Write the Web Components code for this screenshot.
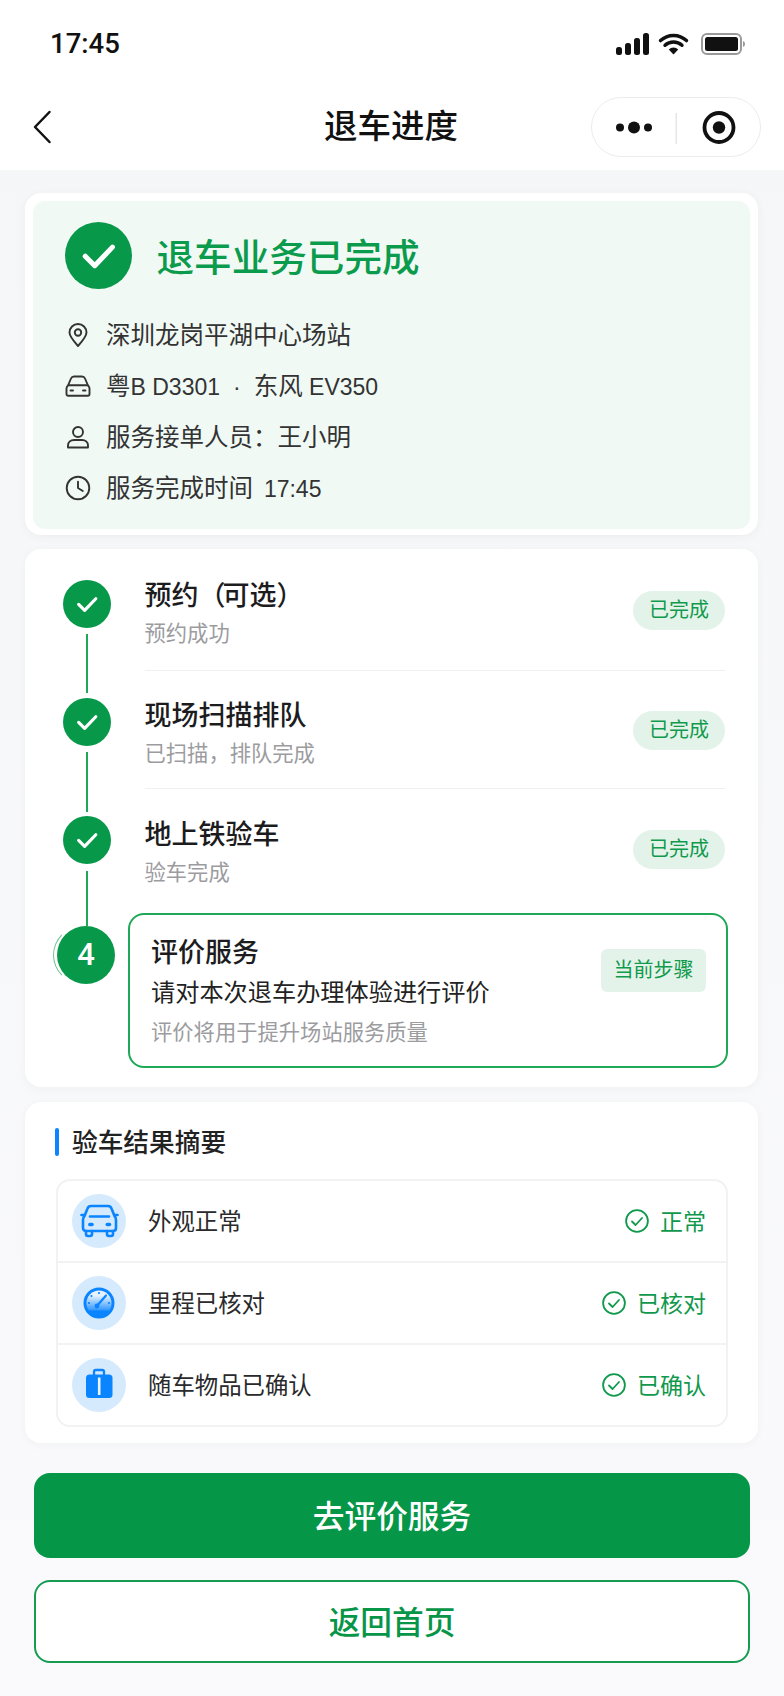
<!DOCTYPE html>
<html lang="zh-CN">
<head>
<meta charset="utf-8">
<title>退车进度</title>
<style>
    html, body { margin: 0; padding: 0; }
    body {
        width: 784px;
        height: 1696px;
        overflow: hidden;
        background: linear-gradient(#f5f6f8, #fafafc);
        font-family: "Liberation Sans", "Noto Sans CJK SC", sans-serif;
        color: #1c1c1e;
    }
    main { display: block; padding: 23px 0 0; }
    .lat { font-size: 23px; }
    .sep { font-size: 23px; margin: 0 13px; }
    .gap { margin-left: 4.5px; }
</style>
</head>
<body>
<app-header></app-header>
<main>
    <done-card>
        <info-row icon="pin">深圳龙岗平湖中心场站</info-row>
        <info-row icon="car">粤<span class="lat">B D3301</span><span class="sep">·</span>东风<span class="lat"> EV350</span></info-row>
        <info-row icon="user">服务接单人员：王小明</info-row>
        <info-row icon="clock">服务完成时间<span class="lat gap"> 17:45</span></info-row>
    </done-card>

    <step-card>
        <step-row style="--top:25px" title-text="预约<span style='margin-right:-3px'>（</span>可选）" sub="预约成功" divider></step-row>
        <step-row style="--top:27px" title-text="现场扫描排队" sub="已扫描，排队完成" divider></step-row>
        <step-row style="--top:28px" title-text="地上铁验车" sub="验车完成"></step-row>
        <current-step></current-step>
    </step-card>

    <summary-card>
        <summary-row icon="car" result="正常">外观正常</summary-row>
        <summary-row icon="gauge" result="已核对">里程已核对</summary-row>
        <summary-row icon="case" result="已确认" last>随车物品已确认</summary-row>
    </summary-card>

    <action-buttons></action-buttons>
</main>

<script>
const GREEN = "#08984a";

const CHECK = `<svg viewBox="0 0 48 48" width="100%" height="100%"><path d="M14.5 24.5l6.8 6.8L34 18" fill="none" stroke="#fff" stroke-width="3.6" stroke-linecap="round" stroke-linejoin="round"/></svg>`;

class AppHeader extends HTMLElement {
    constructor() {
        super();
        this.attachShadow({ mode: "open" });
    }

    connectedCallback() {
        this.shadowRoot.innerHTML = `
        <style>
            :host { display: block; background: #fff; height: 170px; color: #111; }
            .status {
                height: 84px;
                display: flex;
                align-items: center;
                justify-content: space-between;
                padding: 22px 38px 19px 50px;
                box-sizing: border-box;
            }
            .time { font: 500 27.5px/28px Roboto, sans-serif; }
            .status svg { display: block; }
            .nav {
                height: 86px;
                display: grid;
                grid-template-columns: 1fr auto 1fr;
                align-items: center;
                padding: 0 23px;
            }
            .back { margin-left: 9px; display: block; }
            h1 { margin: 0 0 0 -2px; font-size: 33.5px; font-weight: 500; line-height: 46px; }
            .capsule {
                justify-self: end;
                width: 170px;
                height: 60px;
                box-sizing: border-box;
                border: 1.5px solid #ececee;
                border-radius: 30px;
                display: flex;
                align-items: center;
                background: #fff;
            }
        </style>
        <div class="status">
            <span class="time">17:45</span>
            <svg width="130" height="22" viewBox="0 0 130 22">
                <rect x="0" y="14" width="6" height="8" rx="2.5" fill="#111"/>
                <rect x="9" y="10" width="6" height="12" rx="2.5" fill="#111"/>
                <rect x="18" y="5" width="6" height="17" rx="2.5" fill="#111"/>
                <rect x="27" y="0" width="6" height="22" rx="2.5" fill="#111"/>
                <path d="M44.5 7.6a19 19 0 0 1 26 0M49 12.3a12.6 12.6 0 0 1 17 0" fill="none" stroke="#111" stroke-width="3.4" stroke-linecap="round"/>
                <path d="M52.8 16.4a6.8 6.8 0 0 1 9.4 0L57.5 21.5z" fill="#111"/>
                <rect x="86" y="1" width="39" height="20" rx="5" fill="#fff" stroke="#9a9a9c" stroke-width="2"/>
                <rect x="89" y="4" width="33" height="14" rx="2.5" fill="#111"/>
                <path d="M127 8v6c1.4-.5 2-1.6 2-3s-.6-2.500-2-3z" fill="#9a9a9c"/>
            </svg>
        </div>
        <div class="nav">
            <svg class="back" width="20" height="34" viewBox="0 0 20 34"><path d="M17.500 2L3 17l14.500 15" fill="none" stroke="#111" stroke-width="2.500" stroke-linecap="round" stroke-linejoin="round"/></svg>
            <h1>退车进度</h1>
            <div class="capsule">
                <svg width="168" height="57" viewBox="0 0 168 57">
                    <circle cx="28" cy="28.500" r="4" fill="#111"/>
                    <circle cx="42" cy="28.500" r="6" fill="#111"/>
                    <circle cx="56" cy="28.500" r="4" fill="#111"/>
                    <rect x="83.500" y="14" width="1.500" height="31" fill="#e6e6e8"/>
                    <circle cx="127" cy="28.500" r="14.500" fill="none" stroke="#111" stroke-width="3.800"/>
                    <circle cx="127" cy="28.500" r="6.200" fill="#111"/>
                </svg>
            </div>
        </div>
        `;
    }
}

class DoneCard extends HTMLElement {
    constructor() {
        super();
        this.attachShadow({ mode: "open" });
    }

    connectedCallback() {
        this.shadowRoot.innerHTML = `
        <style>
            :host {
                display: block;
                margin: 0 26px 14px 25px;
                padding: 8px 8px 6px;
                background: #fff;
                border-radius: 16px;
                box-shadow: 0 2px 10px rgba(30, 50, 40, 0.05);
            }
            .inner {
                background: #f1f9f5;
                border-radius: 12px;
                padding: 21px 32px 16px;
            }
            .head { display: flex; align-items: center; gap: 24.5px; margin-bottom: 20px; }
            .badge { width: 67px; height: 67px; border-radius: 50%; background: ${GREEN}; flex: none; }
            .title { font-size: 37.6px; line-height: 52px; font-weight: 500; color: #0b9b4c; margin-top: 4px; }
        </style>
        <div class="inner">
            <div class="head">
                <div class="badge">${CHECK}</div>
                <div class="title">退车业务已完成</div>
            </div>
            <slot></slot>
        </div>
        `;
    }
}

const INFO_ICONS = {
    pin: `<path d="M13 24c5-5.600 8.500-9.600 8.500-13.500a8.500 8.500 0 0 0-17 0C4.500 14.400 8 18.400 13 24z"/><circle cx="13" cy="10.500" r="3.200"/>`,
    car: `<path d="M3 12.500L6 5.500C6.500 4.300 7.500 3.500 9 3.500h8c1.500 0 2.500.8 3 2l3 7c1 .8 1.500 1.800 1.500 3V21c0 1-.7 1.800-1.700 1.800H3.200C2.200 22.800 1.500 22 1.500 21v-5.500c0-1.200.5-2.200 1.500-3z"/><path d="M3.500 12.300h19M5.500 17.500H8M18 17.500h2.500"/>`,
    user: `<circle cx="13" cy="8" r="5"/><path d="M3 23.500v-2c0-3.300 2.700-5.500 6-5.500h8c3.300 0 6 2.200 6 5.500v2z"/>`,
    clock: `<circle cx="13" cy="13" r="11.300"/><path d="M13 6.800V13l4.800 3"/>`
};

class InfoRow extends HTMLElement {
    constructor() {
        super();
        this.attachShadow({ mode: "open" });
    }

    connectedCallback() {
        const icon = INFO_ICONS[this.getAttribute("icon")];
        this.shadowRoot.innerHTML = `
        <style>
            :host {
                display: flex;
                align-items: center;
                gap: 15px;
                height: 51px;
                font-size: 24.500px;
                color: #333;
            }
            svg { flex: none; fill: none; stroke: #333; stroke-width: 1.900; stroke-linecap: round; stroke-linejoin: round; }
            span { margin-top: -2px; white-space: pre; }
        </style>
        <svg width="26" height="26" viewBox="0 0 26 26">${icon}</svg>
        <span><slot></slot></span>
        `;
    }
}

class StepCard extends HTMLElement {
    constructor() {
        super();
        this.attachShadow({ mode: "open" });
    }

    connectedCallback() {
        this.shadowRoot.innerHTML = `
        <style>
            :host {
                display: flex;
                margin: 0 26px 15px 25px;
                padding: 4px 31px 19px 0;
                background: #fff;
                border-radius: 16px;
                box-shadow: 0 2px 10px rgba(30, 50, 40, 0.04);
            }
            .rail {
                flex: none;
                width: 66px;
                padding: 27px 0 0 38px;
                display: flex;
                flex-direction: column;
            }
            .dot {
                width: 48px;
                height: 48px;
                border-radius: 50%;
                background: ${GREEN};
                flex: none;
            }
            .dot svg { display: block; transform: scale(.88); }
            .line { width: 2px; margin-left: 23px; background: #1fa857; flex: none; }
            .dot.now {
                width: 58px;
                height: 58px;
                margin-left: -6px;
                position: relative;
                color: #fff;
                font: 500 31px/58px Roboto, sans-serif;
                text-align: center;
            }
            .dot.now::before {
                content: "";
                position: absolute;
                left: -4px;
                top: 0;
                width: 58px;
                height: 58px;
                box-sizing: border-box;
                border-radius: 50%;
                border: 1.500px solid transparent;
                border-left-color: #6cc08e;
            }
            .rows { flex: 1; min-width: 0; }
        </style>
        <div class="rail">
            <div class="dot">${CHECK}</div>
            <div class="line" style="margin-top:6px;margin-bottom:5px;height:59px"></div>
            <div class="dot">${CHECK}</div>
            <div class="line" style="margin-top:6px;margin-bottom:4px;height:60px"></div>
            <div class="dot">${CHECK}</div>
            <div class="line" style="margin-top:7px;height:55px"></div>
            <div class="dot now">4</div>
        </div>
        <div class="rows"><slot></slot></div>
        `;
    }
}

class StepRow extends HTMLElement {
    constructor() {
        super();
        this.attachShadow({ mode: "open" });
    }

    connectedCallback() {
        const divider = this.hasAttribute("divider");
        this.shadowRoot.innerHTML = `
        <style>
            :host {
                display: block;
                margin: 0 2px 0 15.5px;
                height: ${divider ? 118 : 124}px;
                box-sizing: border-box;
                padding-top: var(--top, 24px);
                border-bottom: ${divider ? "1.5px solid #f0f0f2" : "none"};
            }
            .row { display: flex; justify-content: space-between; align-items: flex-start; }
            .title { font-size: 27px; line-height: 36px; font-weight: 500; color: #1c1c1e; }
            .sub { font-size: 21.300px; line-height: 30px; margin-top: 5px; color: #9c9c9f; }
            .tag {
                margin-top: 13px;
                height: 39px;
                width: 92px;
                border-radius: 19.500px;
                background: #e4f3ea;
                color: #0f9a4c;
                font-size: 20px;
                line-height: 39px;
                text-align: center;
            }
        </style>
        <div class="row">
            <div>
                <div class="title">${this.getAttribute("title-text")}</div>
                <div class="sub">${this.getAttribute("sub")}</div>
            </div>
            <div class="tag">已完成</div>
        </div>
        `;
    }
}

class CurrentStep extends HTMLElement {
    constructor() {
        super();
        this.attachShadow({ mode: "open" });
    }

    connectedCallback() {
        this.shadowRoot.innerHTML = `
        <style>
            :host {
                display: flex;
                justify-content: space-between;
                align-items: flex-start;
                height: 155px;
                margin: 0 -1px;
                box-sizing: border-box;
                border: 2px solid #1fa857;
                border-radius: 16px;
                padding: 0 20px 0 21px;
                background: #fff;
            }
            .title { margin-top: 20px; font-size: 27px; line-height: 36px; font-weight: 500; }
            .desc { margin-top: 2px; font-size: 24.200px; line-height: 40px; color: #222; }
            .note { font-size: 21.300px; line-height: 40px; color: #9c9c9f; }
            .tag {
                margin-top: 34px;
                width: 105px;
                height: 43px;
                border-radius: 6px;
                background: #e4f3ea;
                color: #0f9a4c;
                font-size: 20px;
                line-height: 43px;
                text-align: center;
            }
        </style>
        <div>
            <div class="title">评价服务</div>
            <div class="desc">请对本次退车办理体验进行评价</div>
            <div class="note">评价将用于提升场站服务质量</div>
        </div>
        <div class="tag">当前步骤</div>
        `;
    }
}

class SummaryCard extends HTMLElement {
    constructor() {
        super();
        this.attachShadow({ mode: "open" });
    }

    connectedCallback() {
        this.shadowRoot.innerHTML = `
        <style>
            :host {
                display: block;
                margin: 0 26px 0 25px;
                padding: 26px 30px 16px 31px;
                background: #fff;
                border-radius: 16px;
                box-shadow: 0 2px 10px rgba(30, 50, 40, 0.04);
            }
            .head { display: flex; align-items: center; gap: 13px; height: 28px; margin: 0 0 23px -1px; }
            .head i { width: 4px; height: 28px; border-radius: 2px; background: #0a84ff; }
            .head span { font-size: 25.700px; font-weight: 500; color: #222; margin-top: -3px; }
            .box { border: 2px solid #f2f2f4; border-radius: 14px; }
        </style>
        <div class="head"><i></i><span>验车结果摘要</span></div>
        <div class="box"><slot></slot></div>
        `;
    }
}

const SUMMARY_ICONS = {
    car: `<g fill="none" stroke="#0a84ff" stroke-width="2.600" stroke-linecap="round" stroke-linejoin="round">
            <path d="M6.500 16l3-7.500C10 7 11.500 6 13 6h17c1.500 0 3 1 3.500 2.500l3 7.500c1 1 1.500 2.500 1.500 4v8c0 2-1.500 3-3 3H8c-1.500 0-3-1-3-3v-8c0-1.500.5-3 1.500-4z"/>
            <path d="M12 16.500h19M8 31v3c0 1 .7 2 2 2h2c1.300 0 2-1 2-2v-3M29 31v3c0 1 .7 2 2 2h2c1.300 0 2-1 2-2v-3"/>
            <path d="M6.500 15h-3M36.500 15h3"/>
          </g>
          <rect x="10" y="22.700" width="5.800" height="3.600" rx="1.800" fill="#0a84ff"/>
          <rect x="27.500" y="22.700" width="5.800" height="3.600" rx="1.800" fill="#0a84ff"/>`,
    gauge: `<defs><linearGradient id="dial" x1="0" y1="0" x2="0" y2="1"><stop offset="0.25" stop-color="#e6f2ff"/><stop offset="1" stop-color="#2f96fd"/></linearGradient></defs>
            <circle cx="21" cy="21" r="15.500" fill="#0a84ff"/>
            <path d="M8.500 21a12.500 12.500 0 0 1 25 0c0 2.800-.7 5.400-2.200 7.500H10.700C9.200 26.400 8.500 23.800 8.500 21z" fill="url(#dial)"/>
            <path d="M18 25l10-11.500" stroke="#0a84ff" stroke-width="2.200" stroke-linecap="round"/>
            <circle cx="19" cy="24" r="2.400" fill="#0a84ff"/>
            <circle cx="21" cy="11" r="1.100" fill="#0a84ff"/><circle cx="13.500" cy="14" r="1.100" fill="#0a84ff"/><circle cx="11" cy="21" r="1.100" fill="#0a84ff"/><circle cx="31" cy="21" r="1.100" fill="#0a84ff"/>`,
    case: `<path d="M16 11V7.800c0-1.100.7-1.800 1.800-1.800h6.400c1.100 0 1.800.7 1.800 1.800V11" fill="none" stroke="#0a84ff" stroke-width="2.300"/>
           <rect x="8" y="10.500" width="26.500" height="23.500" rx="3.500" fill="#0a84ff"/>
           <rect x="19.900" y="13.500" width="2.600" height="17.500" fill="#eaf4ff"/>`
};

class SummaryRow extends HTMLElement {
    constructor() {
        super();
        this.attachShadow({ mode: "open" });
    }

    connectedCallback() {
        const last = this.hasAttribute("last");
        this.shadowRoot.innerHTML = `
        <style>
            :host {
                display: flex;
                align-items: center;
                height: 80px;
                padding: 0 20px 0 14px;
                border-bottom: ${last ? "none" : "2px solid #f2f2f4"};
                font-size: 23.400px;
                color: #2a2a2c;
            }
            .icon {
                width: 54px;
                height: 54px;
                border-radius: 50%;
                background: #d6eafd;
                margin-right: 22px;
                display: flex;
                align-items: center;
                justify-content: center;
                flex: none;
            }
            .label { flex: 1; margin-top: -2px; }
            .result { display: flex; align-items: center; gap: 11px; color: #10994c; font-size: 23px; }
            .result b { font-weight: 400; margin-top: -2px; }
        </style>
        <span class="icon"><svg width="42" height="42" viewBox="0 0 42 42">${SUMMARY_ICONS[this.getAttribute("icon")]}</svg></span>
        <span class="label"><slot></slot></span>
        <span class="result">
            <svg width="24" height="24" viewBox="0 0 24 24" fill="none" stroke="#10994c" stroke-width="1.800" stroke-linecap="round" stroke-linejoin="round"><circle cx="12" cy="12" r="10.900"/><path d="M7 12.500l3.600 3.500L17 9"/></svg>
            <b>${this.getAttribute("result")}</b>
        </span>
        `;
    }
}

class ActionButtons extends HTMLElement {
    constructor() {
        super();
        this.attachShadow({ mode: "open" });
    }

    connectedCallback() {
        this.shadowRoot.innerHTML = `
        <style>
            :host { display: flex; flex-direction: column; gap: 22px; margin: 30px 34px 0; }
            button {
                display: block;
                width: 100%;
                font: inherit;
                font-size: 31.700px;
                border-radius: 16px;
                padding: 0 0 4px;
            }
            .primary { height: 85px; background: #069647; color: #fff; border: 0; font-weight: 500; }
            .ghost { height: 83px; background: #fff; color: #079548; border: 2px solid #169c50; font-weight: 500; }
        </style>
        <button class="primary">去评价服务</button>
        <button class="ghost">返回首页</button>
        `;
    }
}

customElements.define("app-header", AppHeader);
customElements.define("done-card", DoneCard);
customElements.define("info-row", InfoRow);
customElements.define("step-card", StepCard);
customElements.define("step-row", StepRow);
customElements.define("current-step", CurrentStep);
customElements.define("summary-card", SummaryCard);
customElements.define("summary-row", SummaryRow);
customElements.define("action-buttons", ActionButtons);
</script>
</body>
</html>
